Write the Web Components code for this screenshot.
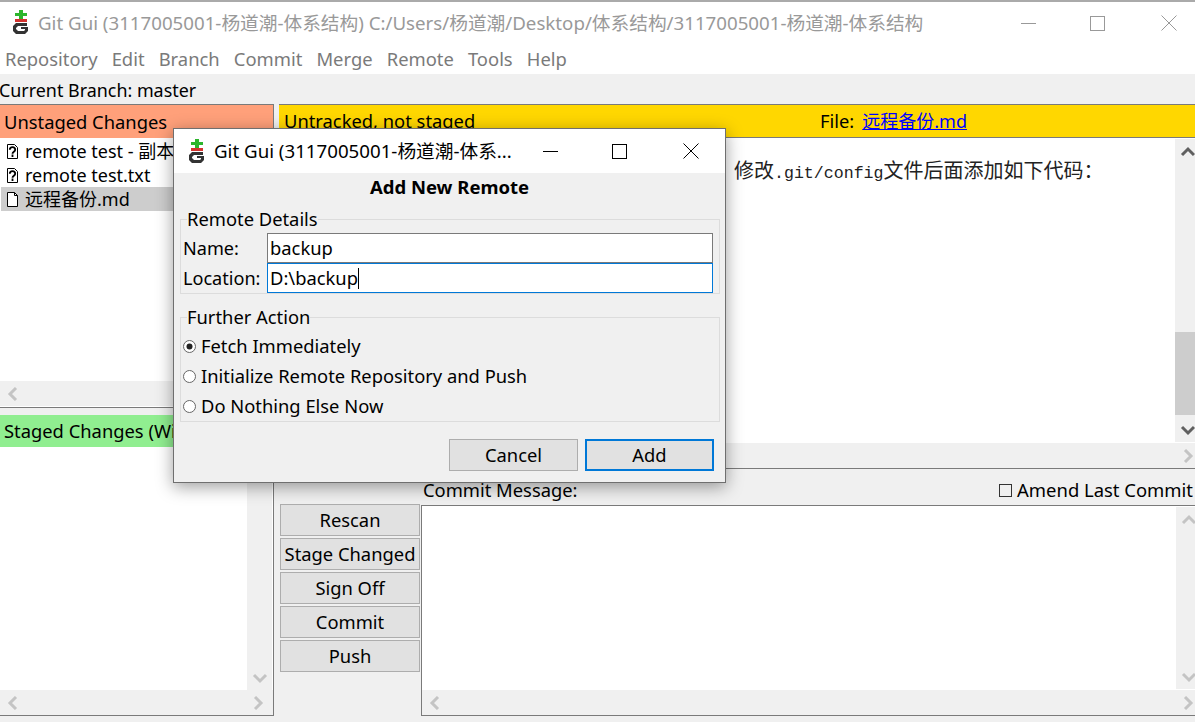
<!DOCTYPE html>
<html>
<head>
<meta charset="utf-8">
<title>Git Gui</title>
<style>
  html, body { margin: 0; height: 100%; overflow: hidden; background: #f0f0f0; }
  body { font: 18.35px/24px "Noto Sans", "Noto Sans CJK SC", sans-serif; color: #000; position: relative; }
</style>
</head>
<body>
<git-window>
  <span slot="title">Git Gui (3117005001-杨道潮-体系结构) C:/Users/杨道潮/Desktop/体系结构/3117005001-杨道潮-体系结构</span>
</git-window>
<remote-dialog></remote-dialog>

<script>
class GitLogo extends HTMLElement {
  connectedCallback() {
    this.attachShadow({ mode: 'open' });
    this.shadowRoot.innerHTML = `
      <style>:host { display: block; width: 16px; height: 24px; flex: none; } svg { display: block; }</style>
      <svg width="16" height="24" viewBox="0 0 16 24">
        <path fill="#2db52d" d="M6 0h4v3h4v3h-4v3H6V6H2V3h4z"/>
        <rect x="2" y="9" width="12" height="3" fill="#d4332f"/>
        <path fill="#333" d="M3 13h11v3H5L3 18v1l2 2h6l1-1v-1H8v-2h7v4l-3 3H3l-3-3v-5z"/>
      </svg>`;
  }
}
customElements.define('git-logo', GitLogo);

class WinControls extends HTMLElement {
  connectedCallback() {
    this.attachShadow({ mode: 'open' });
    this.shadowRoot.innerHTML = `
      <style>
        :host { display: flex; flex: none; color: #000; }
        span { width: 69px; display: flex; align-items: center; justify-content: center; }
        span:last-child { width: 73px; }
        svg { display: block; }
      </style>
      <span><svg width="15" height="15"><path d="M0 7.5h15" stroke="currentColor"/></svg></span>
      <span><svg width="15" height="15"><rect x=".5" y=".5" width="14" height="14" fill="none" stroke="currentColor"/></svg></span>
      <span><svg width="16" height="16"><path d="M.5.5l15 15M15.5.5l-15 15" stroke="currentColor" fill="none"/></svg></span>`;
  }
}
customElements.define('win-controls', WinControls);

class TkScroll extends HTMLElement {
  static chevrons = {
    up: 'M2 9l6-6 6 6', down: 'M2 3l6 6 6-6',
    left: 'M9 1L3 7l6 6', right: 'M3 1l6 6-6 6'
  };
  connectedCallback() {
    const vertical = this.getAttribute('orient') !== 'h';
    const active = this.hasAttribute('active');
    const color = active ? '#606060' : '#c4c4c4';
    const icon = d => `<svg width="16" height="14" viewBox="0 0 ${vertical ? '16 12' : '12 14'}" fill="none"><path d="${d}" stroke="${color}" stroke-width="3"/></svg>`;
    const c = TkScroll.chevrons;
    const first = vertical ? c.up : c.left;
    const last = vertical ? c.down : c.right;
    const before = this.getAttribute('before') || 0;
    const thumb = this.getAttribute('thumb');
    this.attachShadow({ mode: 'open' });
    this.shadowRoot.innerHTML = `
      <style>
        :host { display: flex; flex: none; background: #f0f0f0; flex-direction: ${vertical ? 'column' : 'row'}; }
        :host([orient="h"]) { height: 25px; }
        :host(:not([orient="h"])) { width: 25px; }
        .arrow { flex: none; width: 25px; height: 25px; display: flex; align-items: center; justify-content: center; }
        .track { flex: 1; display: flex; flex-direction: column; }
        .thumb { background: #cdcdcd; flex: none; }
      </style>
      <div class="arrow">${icon(first)}</div>
      <div class="track">
        ${thumb ? `<div style="height:${before}px"></div><div class="thumb" style="height:${thumb}px"></div>` : ''}
      </div>
      <div class="arrow">${icon(last)}</div>`;
  }
}
customElements.define('tk-scroll', TkScroll);

class FileRow extends HTMLElement {
  connectedCallback() {
    const unknown = this.getAttribute('kind') === 'unknown';
    this.attachShadow({ mode: 'open' });
    this.shadowRoot.innerHTML = `
      <style>
        :host { display: flex; align-items: center; height: 24px; padding-left: 7px; white-space: nowrap; font-size: 18px; }
        :host([selected]) { background: #cdcdcd; margin-left: 1px; padding-left: 6px; }
        svg { flex: none; margin-right: 7px; display: block; }
      </style>
      <svg width="11" height="15" viewBox="0 0 11 15" fill="#fff">
        <path d="M.5.5h7l3 3v11H.5z" stroke="#000"/>
        ${unknown ? '<path d="M2.800 5.800c0-3.600 5.400-3.600 5.400 0 0 2-2.700 1.900-2.700 4M5.500 10.500v2.500" fill="none" stroke="#000" stroke-width="1.800"/>' : '<path d="M7.500.5v3h3" fill="none" stroke="#000"/>'}
      </svg>
      <slot></slot>`;
  }
}
customElements.define('file-row', FileRow);

class PaneHeader extends HTMLElement {
  connectedCallback() {
    this.attachShadow({ mode: 'open' });
    this.shadowRoot.innerHTML = `
      <style>
        :host { display: flex; align-items: center; flex: none; height: 33px; padding-left: 5px; white-space: nowrap; overflow: hidden; background: var(--bg); }
      </style>
      <slot></slot>`;
  }
}
customElements.define('pane-header', PaneHeader);

class TkButton extends HTMLElement {
  connectedCallback() {
    this.attachShadow({ mode: 'open' });
    this.shadowRoot.innerHTML = `
      <style>
        :host { display: flex; align-items: center; justify-content: center; box-sizing: border-box; height: 32px; background: #e1e1e1; border: 1px solid #adadad; white-space: nowrap; }
        :host([primary]) { border: 2px solid #0078d7; }
      </style>
      <slot></slot>`;
  }
}
customElements.define('tk-button', TkButton);

class GitWindow extends HTMLElement {
  connectedCallback() {
    this.attachShadow({ mode: 'open' });
    this.shadowRoot.innerHTML = `
      <style>
        :host { display: flex; flex-direction: column; width: 1200px; height: 722px; background: #f0f0f0; }
        .strip { height: 2px; background: #aaa; flex: none; }
        .title { display: flex; align-items: center; height: 42px; flex: none; background: #fff; color: #999; padding-left: 13px; white-space: nowrap; font-size: 18.7px; }
        .title git-logo { margin: 0 9px 0 0; position: relative; top: -1px; }
        .title .text { flex: 1; min-width: 0; overflow: hidden; }
        .title win-controls { color: #999; height: 100%; margin-right: -5px; }
        .menu { display: flex; gap: 14.1px; align-items: center; height: 30px; flex: none; background: #fff; color: #7a7a7a; padding-left: 5px; font-size: 18.4px; }
        .branch { display: flex; align-items: center; height: 30px; flex: none; padding-top: 2px; box-sizing: border-box; margin-left: -1px; font-size: 17.9px; }
        .panes { display: flex; height: 612px; flex: none; }
        .left { width: 274px; flex: none; box-sizing: border-box; border-right: 1px solid #7a7a7a; border-bottom: 1px solid #7a7a7a; display: flex; flex-direction: column; }
        .left pane-header { padding-left: 4px; }
        .right { flex: 1; min-width: 0; margin-left: 5px; display: flex; flex-direction: column; }
        .unstaged { height: 303px; flex: none; border-top: 1px solid #7a7a7a; box-sizing: border-box; display: flex; flex-direction: column; }
        .list { flex: 1; min-height: 0; background: #fff; padding-top: 1px; }
        .gap { height: 1px; flex: none; background: #fff; }
        .sash { height: 7px; flex: none; border-top: 1px solid #7a7a7a; }
        .staged { flex: 1; min-height: 0; display: flex; flex-direction: column; }
        .staged .body { flex: 1; min-height: 0; display: flex; background: #fff; padding-right: 1px; }
        .staged .body div { flex: 1; }
        .staged tk-scroll[orient="h"] { height: 25px; padding-right: 3px; }
        .diff { height: 364px; flex: none; display: flex; flex-direction: column; border-top: 1px solid #7a7a7a; box-sizing: border-box; }
        .diff .head { --bg: #ffd700; height: 32px; border-bottom: 1px solid #7a7a7a; box-sizing: content-box; }
        .head .state { width: 536px; flex: none; }
        .head a { color: #00f; text-decoration: underline; margin-left: 8px; font-size: 18px; }
        .diff .body { height: 304px; flex: none; display: flex; background: #fff; padding-top: 1px; box-sizing: border-box; }
        .diff pre { flex: 1; margin: 0; padding: 16px 0 0 455px; font: 20px/30px "Noto Sans CJK SC", sans-serif; color: #222; white-space: nowrap; }
        .diff pre span { font: 16.600px "Liberation Mono", monospace; }
        .hbar { border-top: 1px solid #fff; }
        .line { height: 1px; flex: none; background: #7a7a7a; }
        .commit { flex: 1; min-height: 0; display: flex; flex-direction: column; }
        .commit-head { height: 36px; flex: none; display: flex; justify-content: space-between; align-items: center; padding: 6px 7px 0 144px; box-sizing: border-box; white-space: nowrap; }
        .amend { display: flex; align-items: center; gap: 5px; font-size: 18.45px; }
        .amend i { display: block; width: 11px; height: 11px; border: 1px solid #333; background: #f0f0f0; }
        .commit-body { flex: 1; min-height: 0; display: flex; }
        .buttons { width: 142px; flex: none; padding: 0 0 0 1px; margin-top: -1px; box-sizing: border-box; display: flex; flex-direction: column; gap: 2px; }
        .buttons tk-button { width: 140px; }
        .message { flex: 1; min-width: 0; display: flex; flex-direction: column; border: 1px solid #7a7a7a; border-right: 0; }
        .message .body { flex: 1; min-height: 0; display: flex; justify-content: flex-end; background: #fff; }
        .message .body tk-scroll { margin: 1px 0; width: 24px; }
      </style>
      <div class="strip"></div>
      <div class="title">
        <git-logo></git-logo>
        <div class="text"><slot name="title"></slot></div>
        <win-controls></win-controls>
      </div>
      <div class="menu">
        <span>Repository</span><span>Edit</span><span>Branch</span><span>Commit</span><span>Merge</span><span>Remote</span><span>Tools</span><span>Help</span>
      </div>
      <div class="branch">Current Branch: master</div>
      <div class="panes">
        <div class="left">
          <div class="unstaged">
            <pane-header style="--bg:#ffa07a">Unstaged Changes</pane-header>
            <div class="list">
              <file-row kind="unknown">remote test - 副本.txt</file-row>
              <file-row kind="unknown">remote test.txt</file-row>
              <file-row selected>远程备份.md</file-row>
            </div>
            <tk-scroll orient="h"></tk-scroll>
            <div class="gap"></div>
          </div>
          <div class="sash"></div>
          <div class="staged">
            <pane-header style="--bg:#90ee90;height:32px">Staged Changes (Will Commit)</pane-header>
            <div class="body"><div></div><tk-scroll></tk-scroll></div>
            <tk-scroll orient="h"></tk-scroll>
          </div>
        </div>
        <div class="right">
          <div class="diff">
            <pane-header class="head">
              <span class="state">Untracked, not staged</span>
              <span>File:</span><a>远程备份.md</a>
            </pane-header>
            <div class="body">
              <pre>修改<span>.git/config</span>文件后面添加如下代码：</pre>
              <tk-scroll active before="168" thumb="83"></tk-scroll>
            </div>
            <tk-scroll class="hbar" orient="h"></tk-scroll>
          </div>
          <div class="line"></div>
          <div class="commit">
            <div class="commit-head">
              <span>Commit Message:</span>
              <span class="amend"><i></i>Amend Last Commit</span>
            </div>
            <div class="commit-body">
              <div class="buttons">
                <tk-button>Rescan</tk-button>
                <tk-button>Stage Changed</tk-button>
                <tk-button>Sign Off</tk-button>
                <tk-button>Commit</tk-button>
                <tk-button>Push</tk-button>
              </div>
              <div class="message">
                <div class="body"><tk-scroll></tk-scroll></div>
                <tk-scroll orient="h"></tk-scroll>
              </div>
            </div>
          </div>
        </div>
      </div>`;
  }
}
customElements.define('git-window', GitWindow);

class RemoteDialog extends HTMLElement {
  connectedCallback() {
    this.attachShadow({ mode: 'open' });
    this.shadowRoot.innerHTML = `
      <style>
        :host { position: absolute; left: 173px; top: 128px; width: 553px; height: 355px; box-sizing: border-box; border: 1px solid #6f6f6f; background: #f0f0f0; box-shadow: 0 4px 16px rgba(0,0,0,.38); display: flex; flex-direction: column; }
        .title { display: flex; align-items: center; height: 44px; flex: none; background: #fff; padding-left: 15px; white-space: nowrap; font-size: 18.7px; }
        .title git-logo { margin-right: 9px; }
        .title .text { flex: 1; }
        .title win-controls { height: 100%; margin-right: -2px; }
        h1 { font: bold 18.5px/28px "Noto Sans", sans-serif; margin: 0; text-align: center; height: 32px; }
        fieldset { margin: 0 5px 0 6px; padding: 0 6px 0 2px; border: 1px solid #dcdcdc; min-width: 0; }
        legend { padding: 0; margin-left: 4px; line-height: 28px; height: 28px; }
        .row { display: flex; align-items: center; height: 30px; }
        .row label { width: 84px; flex: none; font-size: 18.1px; }
        .entry { flex: 1; box-sizing: border-box; height: 30px; background: #fff; border: 1px solid #7a7a7a; padding-left: 2px; display: flex; align-items: center; }
        .entry.focus { border-color: #0078d7; }
        .entry b { display: block; width: 1px; height: 21px; background: #000; }
        .further { margin-top: 9px; }
        .radio { display: flex; align-items: center; gap: 5px; height: 30px; }
        .radio svg { flex: none; display: block; }
        .actions { display: flex; justify-content: flex-end; gap: 7px; padding: 17px 11px 0 0; }
        .actions tk-button { width: 129px; }
      </style>
      <div class="title">
        <git-logo></git-logo>
        <div class="text">Git Gui (3117005001-杨道潮-体系...</div>
        <win-controls></win-controls>
      </div>
      <h1>Add New Remote</h1>
      <fieldset class="details">
        <legend>Remote Details</legend>
        <div class="row"><label>Name:</label><div class="entry">backup</div></div>
        <div class="row"><label>Location:</label><div class="entry focus">D:\\backup<b></b></div></div>
      </fieldset>
      <fieldset class="further">
        <legend>Further Action</legend>
        <div class="radio">
          <svg width="13" height="13"><circle cx="6.500" cy="6.500" r="6" fill="#fff" stroke="#666"/><circle cx="6.500" cy="6.500" r="3" fill="#222"/></svg>
          Fetch Immediately
        </div>
        <div class="radio">
          <svg width="13" height="13"><circle cx="6.500" cy="6.500" r="6" fill="#fff" stroke="#666"/></svg>
          Initialize Remote Repository and Push
        </div>
        <div class="radio">
          <svg width="13" height="13"><circle cx="6.500" cy="6.500" r="6" fill="#fff" stroke="#666"/></svg>
          Do Nothing Else Now
        </div>
      </fieldset>
      <div class="actions">
        <tk-button>Cancel</tk-button>
        <tk-button primary>Add</tk-button>
      </div>`;
  }
}
customElements.define('remote-dialog', RemoteDialog);
</script>
</body>
</html>
